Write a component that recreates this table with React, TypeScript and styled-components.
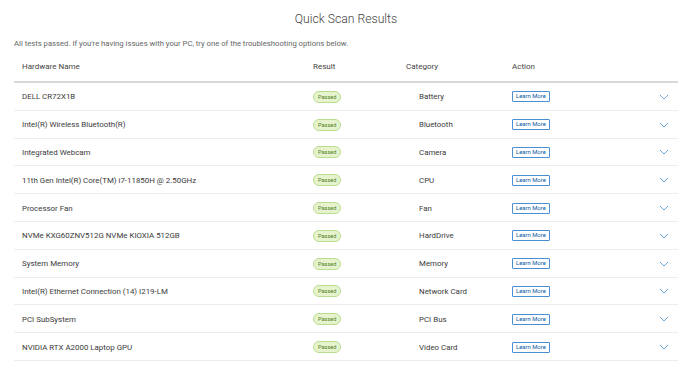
import { createGlobalStyle, styled } from "styled-components";

const GlobalStyle = createGlobalStyle`
  body {
    margin: 0;
    background: #ffffff;
    font-family: Roboto, "Liberation Sans", sans-serif;
  }
`;

const Page = styled.div`
  width: 700px;
  height: 372px;
  padding: 0 22px 0 14px;
  box-sizing: border-box;
  overflow: hidden;
`;

const Title = styled.h1`
  margin: 0;
  padding-top: 9px;
  height: 20px;
  line-height: 20px;
  text-align: center;
  font-size: 12.2px;
  font-weight: 300;
  color: #444;
`;

const Intro = styled.p`
  margin: 0;
  padding-top: 9px;
  height: 12px;
  line-height: 12px;
  font-size: 7.7px;
  color: #666;
`;

const columns = "291px 93px 106px 1fr 24px";

const HeaderRow = styled.div`
  display: grid;
  grid-template-columns: ${columns};
  align-items: center;
  height: 29px;
  margin-top: 2px;
  border-bottom: 2px solid #d9d9d9;
`;

const HeaderCell = styled.div`
  padding-left: 8px;
  font-size: 8px;
  color: #444;
`;

const Row = styled.div`
  display: grid;
  grid-template-columns: ${columns};
  align-items: center;
  height: 27.8px;
  box-sizing: border-box;
  border-bottom: 1px solid #ececec;
  padding-top: 1px;
`;

const Cell = styled.div<{ $indent?: number }>`
  padding-left: ${({ $indent }) => $indent ?? 8}px;
  font-size: 7.9px;
  color: #3a3a3a;
  white-space: nowrap;
`;

const Badge = styled.span`
  display: inline-block;
  height: 10px;
  line-height: 10px;
  padding: 0 4px;
  border: 1px solid #b9dc8f;
  border-radius: 6px;
  background: #e6f3cc;
  color: #4f7f26;
  font-size: 5.6px;
`;

const LearnButton = styled.button`
  height: 11px;
  padding: 0 3px;
  border: 1px solid #4a8fd3;
  border-radius: 1px;
  background: #fff;
  color: #0b5aa5;
  font-family: inherit;
  font-size: 5.9px;
  line-height: 9px;
  cursor: pointer;
`;

const Chevron = styled.svg`
  display: block;
  width: 10px;
  height: 6px;
`;

const items = [
  ["DELL CR72X1B", "Battery"],
  ["Intel(R) Wireless Bluetooth(R)", "Bluetooth"],
  ["Integrated Webcam", "Camera"],
  ["11th Gen Intel(R) Core(TM) i7-11850H @ 2.50GHz", "CPU"],
  ["Processor Fan", "Fan"],
  ["NVMe KXG60ZNV512G NVMe KIOXIA 512GB", "HardDrive"],
  ["System Memory", "Memory"],
  ["Intel(R) Ethernet Connection (14) I219-LM", "Network Card"],
  ["PCI SubSystem", "PCI Bus"],
  ["NVIDIA RTX A2000 Laptop GPU", "Video Card"],
];

export default function App() {
  return (
    <>
      <GlobalStyle />
      <Page>
        <Title>Quick Scan Results</Title>
        <Intro>
          All tests passed. If you're having issues with your PC, try one of
          the troubleshooting options below.
        </Intro>
        <HeaderRow>
          <HeaderCell>Hardware Name</HeaderCell>
          <HeaderCell>Result</HeaderCell>
          <HeaderCell>Category</HeaderCell>
          <HeaderCell>Action</HeaderCell>
          <div />
        </HeaderRow>
        {items.map(([name, category]) => (
          <Row key={name}>
            <Cell>{name}</Cell>
            <Cell>
              <Badge>Passed</Badge>
            </Cell>
            <Cell $indent={21}>{category}</Cell>
            <Cell>
              <LearnButton>Learn More</LearnButton>
            </Cell>
            <Cell $indent={5}>
              <Chevron viewBox="0 0 10 6">
                <path
                  d="M1 1l4 4L9 1"
                  fill="none"
                  stroke="#5b9bd5"
                  strokeWidth="0.9"
                />
              </Chevron>
            </Cell>
          </Row>
        ))}
      </Page>
    </>
  );
}
